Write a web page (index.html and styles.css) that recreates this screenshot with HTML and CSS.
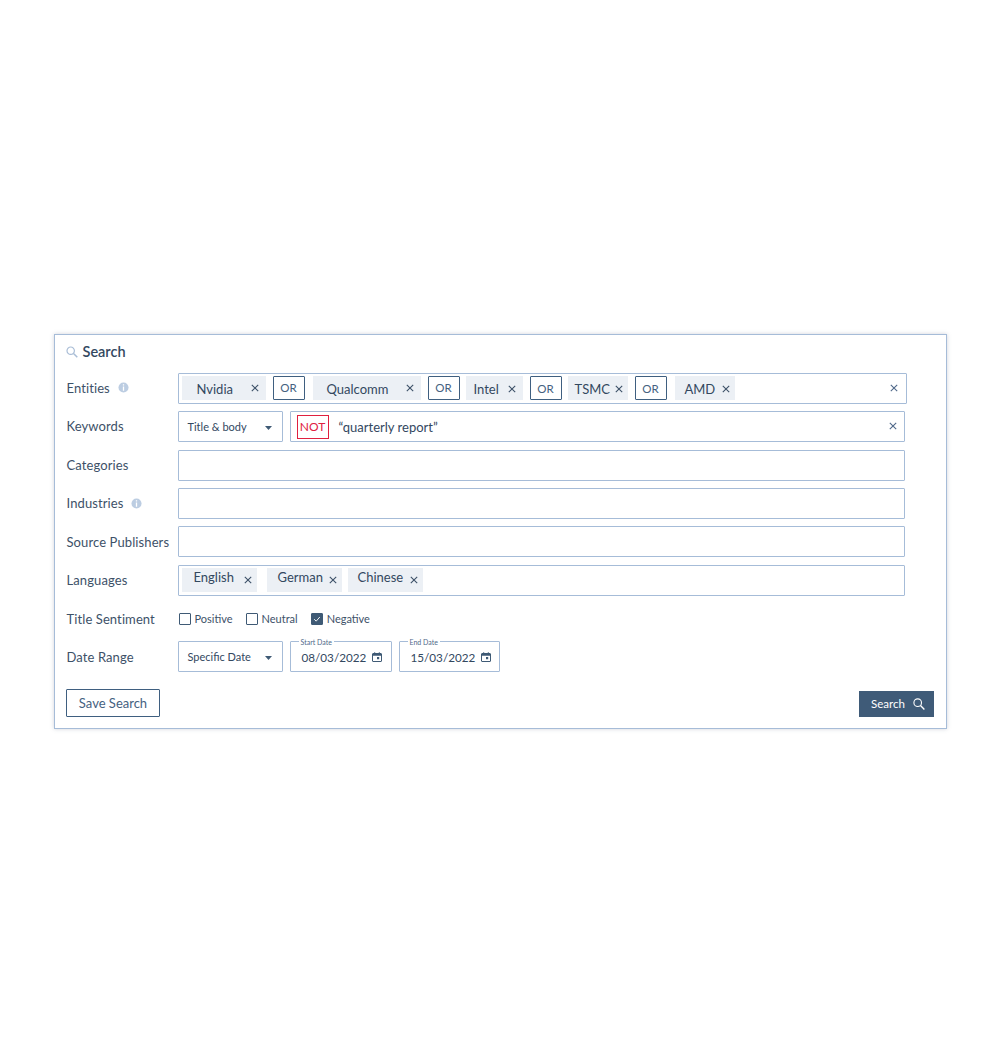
FILE: index.html
```html
<!DOCTYPE html>
<html lang="en">
<head>
<meta charset="utf-8">
<title>Search</title>
<link rel="stylesheet" href="styles.css">
</head>
<body>
<svg class="defs" width="0" height="0" aria-hidden="true">
  <symbol id="x" viewBox="0 0 8 8"><path d="M.8.8l6.4 6.4M7.2.8L.8 7.2" fill="none" stroke="currentColor" stroke-width="1.1"/></symbol>
  <symbol id="info" viewBox="0 0 12 12"><circle cx="6" cy="6" r="5.5" fill="#bccde2"/><path d="M5.3 2.5h1.4v1.4H5.3zM5.3 5h1.4v4.5H5.3z" fill="#fff"/></symbol>
  <symbol id="cal" viewBox="0 0 10 10"><path d="M1 1.5h8a.5.5 0 0 1 .5.5v7a.5.5 0 0 1-.5.5H1a.5.5 0 0 1-.5-.5V2a.5.5 0 0 1 .5-.5z" fill="none" stroke="#3f5a75"/><path d="M.5 2h9v1.8h-9zM2.2.3h1v1.6h-1zM6.8.3h1v1.6h-1zM5 5h2.2v2.2H5z" fill="#3f5a75"/></symbol>
  <symbol id="caret" viewBox="0 0 7 4"><path d="M0 0h7L3.5 4z" fill="#3f5a75"/></symbol>
</svg>
<main class="page">
  <section class="card">
    <h1 class="title">
      <svg class="title-icon" viewBox="0 0 12 12"><circle cx="4.7" cy="4.7" r="3.7" fill="none" stroke="#a9bdd6" stroke-width="1.2"/><path d="M7.5 7.5l3.8 3.8" stroke="#a9bdd6" stroke-width="1.5"/></svg>
      Search
    </h1>
    <div class="rows">
      <div class="row">
        <label class="label label-up">Entities <svg class="info"><use href="#info"/></svg></label>
        <div class="field field-entities">
          <span class="chip c-nvidia"><span>Nvidia</span><svg class="x"><use href="#x"/></svg></span>
          <span class="or or-up">OR</span>
          <span class="chip c-qualcomm"><span>Qualcomm</span><svg class="x"><use href="#x"/></svg></span>
          <span class="or or-up">OR</span>
          <span class="chip c-intel"><span>Intel</span><svg class="x"><use href="#x"/></svg></span>
          <span class="or">OR</span>
          <span class="chip c-tsmc"><span>TSMC</span><svg class="x"><use href="#x"/></svg></span>
          <span class="or">OR</span>
          <span class="chip c-amd"><span>AMD</span><svg class="x"><use href="#x"/></svg></span>
          <svg class="x clear"><use href="#x"/></svg>
        </div>
      </div>
      <div class="row">
        <label class="label label-up">Keywords</label>
        <div class="controls">
          <div class="select"><span>Title &amp; body</span><svg class="caret"><use href="#caret"/></svg></div>
          <div class="field field-grow">
            <span class="not">NOT</span>
            <span class="query">“quarterly report”</span>
            <svg class="x clear clear-narrow"><use href="#x"/></svg>
          </div>
        </div>
      </div>
      <div class="row"><label class="label">Categories</label><div class="field"></div></div>
      <div class="row"><label class="label">Industries <svg class="info"><use href="#info"/></svg></label><div class="field"></div></div>
      <div class="row"><label class="label">Source Publishers</label><div class="field"></div></div>
      <div class="row">
        <label class="label">Languages</label>
        <div class="field field-langs">
          <span class="chip lang l-english"><span>English</span><svg class="x"><use href="#x"/></svg></span>
          <span class="chip lang l-german"><span>German</span><svg class="x"><use href="#x"/></svg></span>
          <span class="chip lang l-chinese"><span>Chinese</span><svg class="x"><use href="#x"/></svg></span>
        </div>
      </div>
      <div class="row">
        <label class="label">Title Sentiment</label>
        <div class="checks">
          <span class="check"><i class="box"></i>Positive</span>
          <span class="check"><i class="box"></i>Neutral</span>
          <span class="check"><i class="box box-on"><svg viewBox="0 0 12 12"><path d="M2.6 6.2l2.4 2.4 4.4-5" fill="none" stroke="#fff" stroke-width="1.1"/></svg></i>Negative</span>
        </div>
      </div>
      <div class="row">
        <label class="label">Date Range</label>
        <div class="controls controls-up">
          <div class="select"><span>Specific Date</span><svg class="caret"><use href="#caret"/></svg></div>
          <div class="date"><span class="date-label">Start Date</span><span>08/03/2022</span><svg class="cal"><use href="#cal"/></svg></div>
          <div class="date"><span class="date-label">End Date</span><span>15/03/2022</span><svg class="cal"><use href="#cal"/></svg></div>
        </div>
      </div>
    </div>
    <footer class="actions">
      <button class="btn-outline" type="button">Save Search</button>
      <button class="btn-solid" type="button">Search
        <svg viewBox="0 0 12 12"><circle cx="4.7" cy="4.7" r="3.8" fill="none" stroke="#fff" stroke-width="1.1"/><path d="M7.5 7.5l3.9 3.9" stroke="#fff" stroke-width="1.4"/></svg>
      </button>
    </footer>
  </section>
</main>
</body>
</html>
```
FILE: styles.css
```css
* { box-sizing: border-box; }
html, body { margin: 0; background: #fff; }
body { font-family: Lato, "Open Sans", sans-serif; color: #3d5168; }
.defs { position: absolute; }
.page { min-height: 1062px; display: flex; align-items: center; justify-content: center; }
.card {
  width: 893px; height: 395px; margin-top: 1px;
  border: 1.5px solid #a6bcd8;
  box-shadow: 0 0 4px rgba(120, 130, 150, .35);
  padding: 0 12px;
  background: #fff;
  display: flex; flex-direction: column;
}
.title {
  margin: 8px 0 0 -1px; height: 17px;
  display: flex; align-items: center; gap: 5px;
  font-size: 14.5px; font-weight: 600; line-height: 17px; color: #33485f;
}
.title-icon { width: 12px; height: 12px; }
.rows { margin-top: 12.8px; display: flex; flex-direction: column; gap: 7.4px; }
.row { display: flex; align-items: center; height: 31px; }
.label { width: 111px; flex: none; font-size: 13px; letter-spacing: .1px; color: #3d5168; display: flex; align-items: center; gap: 8px; }
.label-up { padding-bottom: 1px; }
.info { width: 11px; height: 11px; }
.field {
  width: 727px; height: 31px; flex: none;
  border: 1.5px solid #a6bcd8; border-radius: 1px;
  display: flex; align-items: center; position: relative;
}
.field-entities { width: 729px; padding-left: 3px; gap: 7px; }
.field-grow { width: 615px; padding-left: 6px; }
.field-langs { padding-left: 3px; gap: 10px; }
.x { width: 8px; height: 8px; flex: none; color: #3d5168; }
.clear { position: absolute; right: 8px; top: 10px; color: #50698a; }
.clear-narrow { right: 7px; }
.chip {
  height: 24px; flex: none; background: #ecf0f5; font-size: 13px; color: #33485f;
  display: flex; align-items: center; justify-content: space-between;
}
.chip .x { margin-top: 1px; }
.c-nvidia { width: 84px; padding: 1px 7px 0 15px; }
.c-nvidia .x, .c-qualcomm .x { margin-top: -2px; }
.c-qualcomm { width: 108px; margin-left: 1px; padding: 1px 7px 0 14px; }
.c-intel { width: 57px; margin-left: -1px; padding: 1px 7px 0 8px; }
.c-tsmc { width: 60px; margin-left: -1px; padding: 1px 5px 0 7px; }
.c-amd { width: 60px; margin-left: 1px; padding: 1px 5px 0 10px; }
.or {
  width: 32px; height: 24px; flex: none;
  border: 1.5px solid #3f5f80; border-radius: 1px;
  font-size: 11.5px; color: #45617f;
  display: flex; align-items: center; justify-content: center;
}
.or-up { padding-bottom: 2px; }
.not {
  width: 32px; height: 24px;
  border: 1.5px solid #e0203f;
  font-size: 12px; color: #e0203f;
  display: flex; align-items: center; justify-content: center;
}
.query { margin-left: 10px; font-size: 13px; color: #33485f; }
.controls { display: flex; gap: 7px; }
.controls-up { margin-top: -1px; }
.select {
  width: 105px; height: 31px; padding: 0 10px 0 9px;
  border: 1.5px solid #a6bcd8; border-radius: 1px;
  display: flex; align-items: center; justify-content: space-between;
  font-size: 11px; color: #33485f;
}
.caret { width: 7px; height: 4px; margin-top: 3px; }
.lang { padding: 0 5px 0 12px; }
.lang > span { margin-top: -6px; }
.lang .x { margin-top: -1px; }
.l-english { width: 75px; }
.l-german { width: 75px; padding-left: 11px; }
.l-chinese { width: 75px; padding-left: 10px; margin-left: -4px; }
.checks { display: flex; gap: 13px; padding-left: 1px; font-size: 11px; color: #3d5168; }
.check { display: flex; align-items: center; gap: 4px; }
.box { width: 12px; height: 12px; border: 1px solid #3f5a75; display: block; border-radius: 1px; }
.box-on { background: #3f5a75; }
.box-on svg { display: block; width: 10px; height: 10px; }
.date {
  position: relative; width: 102px; height: 31px; padding: 1px 0 0 11px;
  border: 1.5px solid #a6bcd8; border-radius: 1px;
  display: flex; align-items: center; font-size: 11.7px; color: #33485f;
}
.date + .date { width: 101px; }
.date-label {
  position: absolute; top: -4px; left: 8px; padding: 0 2px; background: #fff;
  font-size: 7px; line-height: 8px; color: #50698a;
}
.cal { width: 10px; height: 10px; margin-left: 6px; }
.actions { margin-top: 16px; display: flex; justify-content: space-between; align-items: flex-end; }
.btn-outline {
  width: 94px; height: 28px; padding: 0 0 0 1px; margin-left: -1px;
  background: #fff; border: 1.5px solid #3f5f80; border-radius: 1px;
  font: 400 13px Lato, sans-serif; color: #45617f;
}
.btn-solid {
  width: 75px; height: 26px; padding: 0 0 0 4px;
  background: #3f5b78; border: 0;
  font: 400 11.5px Lato, sans-serif; color: #fff;
  display: flex; align-items: center; justify-content: center; gap: 8px;
}
.btn-solid svg { width: 12px; height: 12px; }
```
